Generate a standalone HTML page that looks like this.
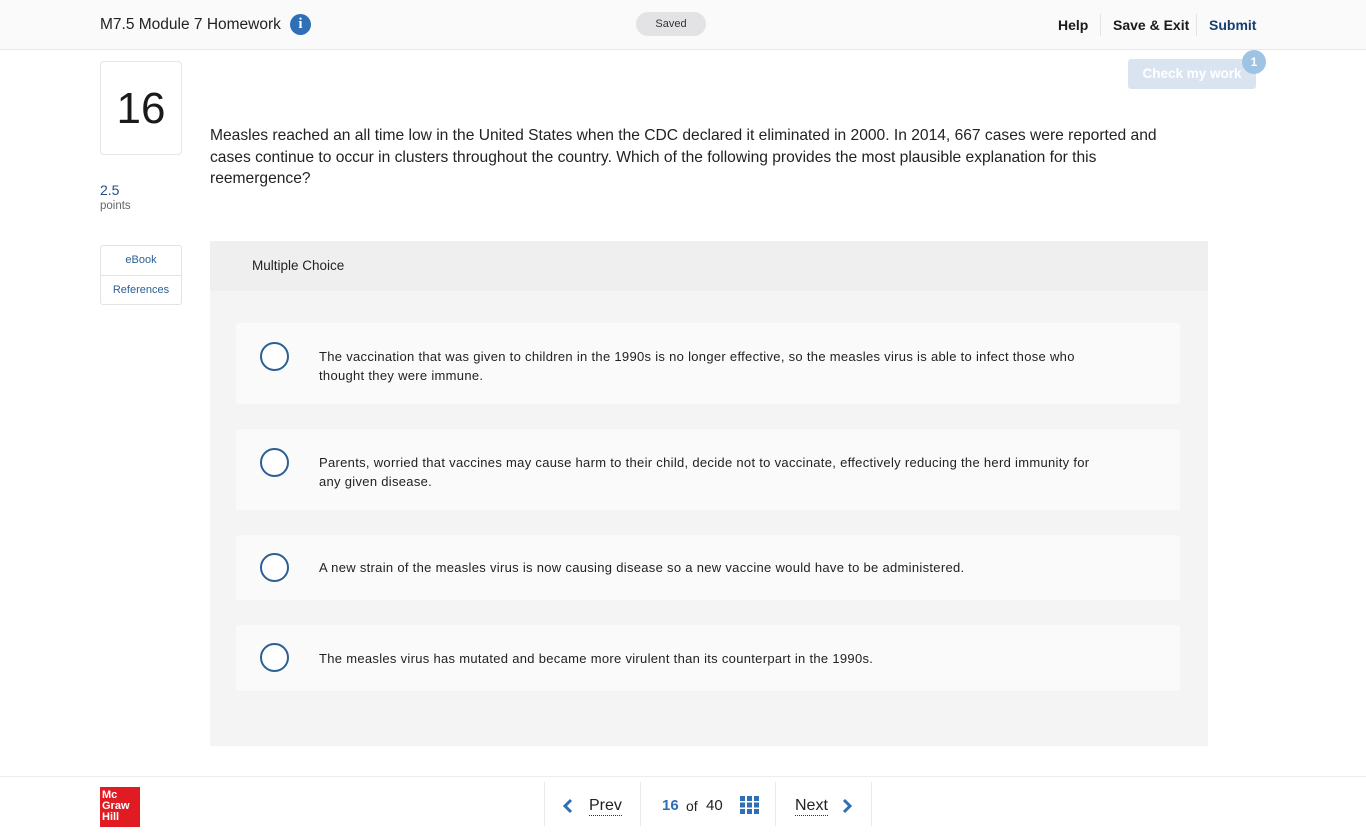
<!DOCTYPE html>
<html><head><meta charset="utf-8"><style>
*{box-sizing:border-box;margin:0;padding:0}
body{width:1366px;height:836px;background:#fff;font-family:"Liberation Sans",sans-serif;color:#222;position:relative;overflow:hidden}
.top{position:absolute;left:0;top:0;width:1366px;height:50px;background:#fafafa;border-bottom:1px solid #e8e8e8}
.abs{position:absolute}
.nav{font-size:14px;font-weight:bold;color:#1a1a1a}
.sep{position:absolute;top:14px;width:1px;height:22px;background:#e3e3e3}
.opt{position:absolute;left:236px;width:944px;background:#fafafa;border-radius:3px}
.radio{position:absolute;left:24px;width:29px;height:29px;border:2px solid #2c5f94;border-radius:50%;background:#fff}
.ot{position:absolute;left:83px;font-size:13px;line-height:19px;color:#222;width:790px;letter-spacing:.3px}
</style></head><body>
<div class="top">
 <div class="abs" style="left:100px;top:16px;font-size:15.5px;color:#222">M7.5 Module 7 Homework</div>
 <div class="abs" style="left:290px;top:14px;width:21px;height:21px;border-radius:50%;background:#2f6fb5;color:#fff;font:bold 15px 'Liberation Serif',serif;text-align:center;line-height:21px">i</div>
 <div class="abs" style="left:636px;top:12px;width:70px;height:24px;border-radius:12px;background:#e3e3e5;font-size:11px;text-align:center;line-height:24px;color:#333">Saved</div>
 <div class="abs nav" style="left:1058px;top:17px">Help</div>
 <div class="sep" style="left:1100px"></div>
 <div class="abs nav" style="left:1113px;top:17px">Save &amp; Exit</div>
 <div class="sep" style="left:1196px"></div>
 <div class="abs nav" style="left:1209px;top:17px;color:#173f6e">Submit</div>
</div>
<div class="abs" style="left:1128px;top:59px;width:128px;height:30px;background:#dae4f1;border-radius:3px;color:#fff;font-weight:bold;font-size:13.5px;text-align:center;line-height:30px">Check my work</div>
<div class="abs" style="left:1242px;top:50px;width:24px;height:24px;border-radius:50%;background:#9fc3e3;color:#fff;font-size:12px;font-weight:bold;text-align:center;line-height:24px">1</div>

<div class="abs" style="left:100px;top:61px;width:82px;height:94px;border:1px solid #e6e6e6;border-radius:4px;font-size:44px;text-align:center;line-height:94px;color:#1a1a1a">16</div>
<div class="abs" style="left:100px;top:182px;font-size:14px;color:#1f4e85">2.5</div>
<div class="abs" style="left:100px;top:200px;font-size:11.5px;color:#666">points</div>
<div class="abs" style="left:100px;top:245px;width:82px;height:60px;border:1px solid #e3e3e3;border-radius:3px">
 <div style="height:30px;border-bottom:1px solid #e3e3e3;text-align:center;line-height:29px;font-size:11px;color:#2c5f94">eBook</div>
 <div style="text-align:center;line-height:28px;font-size:11px;color:#2c5f94">References</div>
</div>

<div class="abs" style="left:210px;top:125px;width:985px;font-size:15.6px;line-height:21.5px;color:#222">Measles reached an all time low in the United States when the CDC declared it eliminated in 2000. In 2014, 667 cases were reported and cases continue to occur in clusters throughout the country. Which of the following provides the most plausible explanation for this reemergence?</div>

<div class="abs" style="left:210px;top:241px;width:998px;height:505px;background:#f4f4f4">
 <div style="height:50px;background:#efefef;padding-left:42px;line-height:50px;font-size:13.5px;color:#222">Multiple Choice</div>
</div>
<div class="opt" style="top:323px;height:81px"><div class="radio" style="top:19px"></div><div class="ot" style="top:24px">The vaccination that was given to children in the 1990s is no longer effective, so the measles virus is able to infect those who thought they were immune.</div></div>
<div class="opt" style="top:429px;height:81px"><div class="radio" style="top:19px"></div><div class="ot" style="top:24px">Parents, worried that vaccines may cause harm to their child, decide not to vaccinate, effectively reducing the herd immunity for any given disease.</div></div>
<div class="opt" style="top:535px;height:65px"><div class="radio" style="top:18px"></div><div class="ot" style="top:23px">A new strain of the measles virus is now causing disease so a new vaccine would have to be administered.</div></div>
<div class="opt" style="top:625px;height:66px"><div class="radio" style="top:18px"></div><div class="ot" style="top:24px">The measles virus has mutated and became more virulent than its counterpart in the 1990s.</div></div>

<div class="abs" style="left:0;top:776px;width:1366px;height:1px;background:#ececec"></div>
<div class="abs" style="left:100px;top:787px;width:40px;height:40px;background:#e01b22;color:#fff;font-weight:bold;font-size:11px;line-height:11px;padding:3px 0 0 2px">Mc<br>Graw<br>Hill</div>
<div class="abs" style="left:544px;top:782px;width:1px;height:44px;background:#eaeaea"></div>
<div class="abs" style="left:640px;top:782px;width:1px;height:44px;background:#eaeaea"></div>
<div class="abs" style="left:775px;top:782px;width:1px;height:44px;background:#eaeaea"></div>
<div class="abs" style="left:871px;top:782px;width:1px;height:44px;background:#eaeaea"></div>
<svg class="abs" style="left:562px;top:798px" width="12" height="16"><path d="M9 2 L3 8 L9 14" stroke="#2f6fb5" stroke-width="3" fill="none"/></svg>
<div class="abs" style="left:589px;top:797px;font-size:16px;color:#222;border-bottom:1px dotted #333;line-height:18px">Prev</div>
<div class="abs" style="left:662px;top:797px;font-size:15px;font-weight:bold;color:#2f6fb5">16</div>
<div class="abs" style="left:686px;top:798px;font-size:14px;color:#222">of</div>
<div class="abs" style="left:706px;top:797px;font-size:15px;color:#222">40</div>
<svg class="abs" style="left:740px;top:796px" width="19" height="18" fill="#2f6fb5"><rect x="0" y="0" width="5" height="5"/><rect x="7" y="0" width="5" height="5"/><rect x="14" y="0" width="5" height="5"/><rect x="0" y="6.5" width="5" height="5"/><rect x="7" y="6.5" width="5" height="5"/><rect x="14" y="6.5" width="5" height="5"/><rect x="0" y="13" width="5" height="5"/><rect x="7" y="13" width="5" height="5"/><rect x="14" y="13" width="5" height="5"/></svg>
<div class="abs" style="left:795px;top:797px;font-size:16px;color:#222;border-bottom:1px dotted #333;line-height:18px">Next</div>
<svg class="abs" style="left:841px;top:798px" width="12" height="16"><path d="M3 2 L9 8 L3 14" stroke="#2f6fb5" stroke-width="3" fill="none"/></svg>
</body></html>
